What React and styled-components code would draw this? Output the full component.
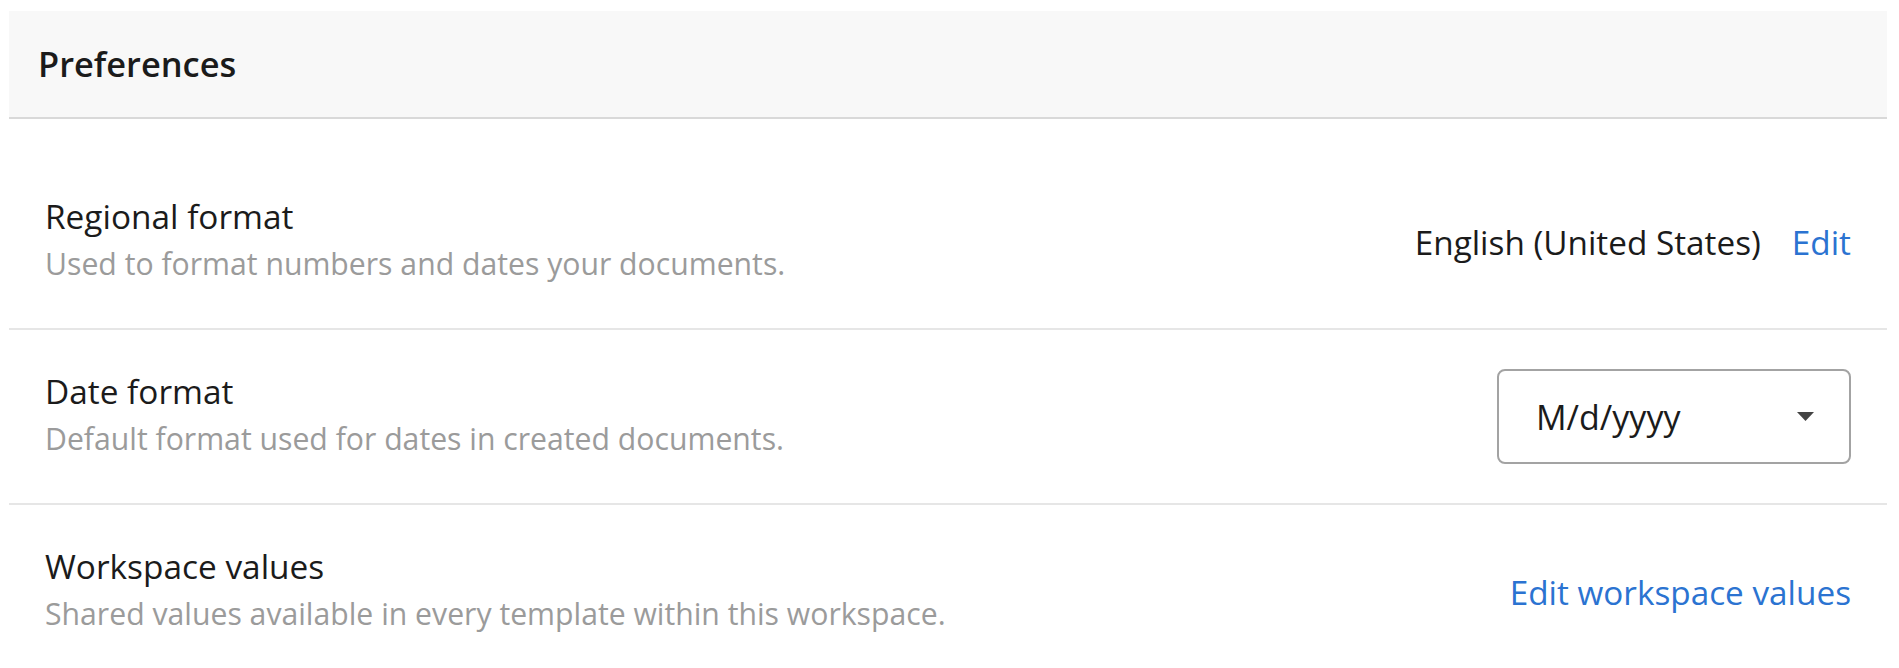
import React from 'react';
import styled, { createGlobalStyle } from 'styled-components';

const GlobalStyle = createGlobalStyle`
  body {
    margin: 0;
    background: #ffffff;
    font-family: "Open Sans", "Noto Sans", sans-serif;
  }
`;

const settings = [
  {
    title: 'Regional format',
    description: 'Used to format numbers and dates your documents.',
    kind: 'value',
    value: 'English (United States)',
    action: 'Edit',
  },
  {
    title: 'Date format',
    description: 'Default format used for dates in created documents.',
    kind: 'select',
    value: 'M/d/yyyy',
  },
  {
    title: 'Workspace values',
    description: 'Shared values available in every template within this workspace.',
    kind: 'link',
    action: 'Edit workspace values',
  },
];

const CaretDown = () => (
  <svg width="17" height="9" viewBox="0 0 17 9" aria-hidden="true">
    <path d="M0 0 H17 L8.5 9 Z" fill="#444444" />
  </svg>
);

const SettingControl = ({ item }) => {
  if (item.kind === 'select') {
    return (
      <Select>
        <SelectValue>{item.value}</SelectValue>
        <CaretDown />
      </Select>
    );
  }
  if (item.kind === 'value') {
    return (
      <ValueGroup>
        <Value>{item.value}</Value>
        <Link href="#">{item.action}</Link>
      </ValueGroup>
    );
  }
  return <Link href="#">{item.action}</Link>;
};

const App = () => {
  return (
    <>
      <GlobalStyle />
      <Panel>
        <Header>
          <HeaderTitle>Preferences</HeaderTitle>
        </Header>
        <List>
          {settings.map((item) => (
            <Row key={item.title}>
              <Info>
                <Title>{item.title}</Title>
                <Description>{item.description}</Description>
              </Info>
              <SettingControl item={item} />
            </Row>
          ))}
        </List>
      </Panel>
    </>
  );
};

export default App;

const Panel = styled.section`
  margin: 11px 12px 0 9px;
  display: flex;
  flex-direction: column;
`;

const Header = styled.header`
  height: 106px;
  padding: 0 29px;
  display: flex;
  align-items: center;
  background-color: #f8f8f8;
  border-bottom: 2px solid #d9d9d9;
`;

const HeaderTitle = styled.h2`
  margin: 0;
  font-size: 34.4px;
  font-weight: 600;
  line-height: 46px;
  color: #1b1b1b;
`;

const List = styled.div`
  padding-top: 36px;
  display: flex;
  flex-direction: column;
`;

const Row = styled.div`
  height: 173px;
  padding: 0 36px 0 36px;
  display: flex;
  align-items: center;
  justify-content: space-between;
  border-bottom: 2px solid #e6e6e6;

  &:last-child {
    border-bottom: none;
  }
`;

const Info = styled.div`
  display: flex;
  flex-direction: column;
  gap: 3px;
  padding-bottom: 4px;
`;

const Title = styled.div`
  font-size: 33.4px;
  line-height: 46px;
  color: #1b1b1b;
`;

const Description = styled.div`
  font-size: 30.2px;
  line-height: 44px;
  color: #9b9b9b;
`;

const ValueGroup = styled.div`
  display: flex;
  align-items: center;
  gap: 31px;
`;

const Value = styled.span`
  font-size: 33.3px;
  line-height: 46px;
  color: #1b1b1b;
`;

const Link = styled.a`
  font-size: 33.3px;
  line-height: 46px;
  color: #2b73d1;
  text-decoration: none;
`;

const Select = styled.div`
  box-sizing: border-box;
  width: 354px;
  height: 95px;
  padding: 0 35px 0 37px;
  display: flex;
  align-items: center;
  justify-content: space-between;
  border: 2px solid #a3a3a3;
  border-radius: 8px;
  background-color: #ffffff;
`;

const SelectValue = styled.span`
  font-size: 34px;
  line-height: 46px;
  color: #1b1b1b;
`;
